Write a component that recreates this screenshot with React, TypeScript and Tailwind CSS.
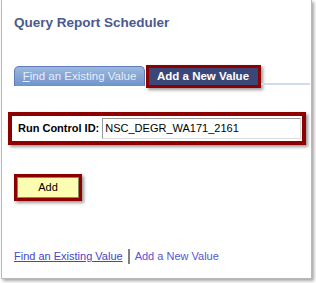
const App = () => {
    return (
        <div className="w-[316px] h-[283px] bg-white" style={{ fontFamily: '"Liberation Sans", Arial, sans-serif' }}>
            <div className="ml-[1px] w-[311px] h-[279px] border-l border-r border-b border-[#b8b8b8] shadow-[2px_2px_3px_rgba(0,0,0,0.35)] flex flex-col">
                <h1 className="pl-[12px] pt-[15px] text-[13.5px] font-bold text-[#4b5a8d] leading-[16px]">Query Report Scheduler</h1>

                <div className="flex items-end mt-[34px] pl-[12px] pr-[1px]">
                    <div className="w-[131px] h-[20px] rounded-t-[5px] border border-b-0 border-[#5d7cb4] bg-gradient-to-b from-[#9bb8e0] to-[#6f93c9] flex items-center justify-center text-[11.5px] text-[#e8eef8] leading-none">
                        <span><span className="underline">F</span>ind an Existing Value</span>
                    </div>
                    <div className="ml-[1px] mb-[-2px] border-[3px] border-[#8e0000] shadow-[2px_2px_3px_rgba(0,0,0,0.4)]">
                        <div className="w-[109px] h-[17px] bg-[#3c4779] flex items-center pl-[8px] text-[11.5px] font-bold text-white leading-none">
                            Add a New Value
                        </div>
                    </div>
                    <div className="flex-1 h-[2px] bg-[#cfdcf0] mb-[1px]"></div>
                </div>

                <div className="mt-[26px] ml-[6px] w-[298px] h-[33px] border-[4px] border-[#8e0000] shadow-[2px_2px_3px_rgba(0,0,0,0.4)] flex items-center pl-[6px] pr-[1px]">
                    <span className="text-[11px] font-bold text-black mr-[3px]">Run Control ID:</span>
                    <div className="flex-1 h-[21px] border border-[#999999] border-r-[#dddddd] border-b-[#dddddd] bg-white flex items-center pl-[2px] text-[11px] text-black">
                        NSC_DEGR_WA171_2161
                    </div>
                </div>

                <div className="mt-[29px] ml-[12px] w-[68px] h-[27px] border-[3px] border-[#8e0000] shadow-[2px_2px_3px_rgba(0,0,0,0.4)]">
                    <div className="w-full h-full bg-[#fdfdb2] border border-[#8a8a6a] flex items-center justify-center text-[11px] text-black leading-none">
                        Add
                    </div>
                </div>

                <div className="mt-[48px] pl-[12px] flex items-center text-[11px] leading-none">
                    <span className="text-[#4545c8] underline">Find an Existing Value</span>
                    <span className="mx-[5px] w-[2px] h-[15px] bg-[#808080]"></span>
                    <span className="text-[#5555d5]">Add a New Value</span>
                </div>
            </div>
        </div>
    );
};

export default App;
